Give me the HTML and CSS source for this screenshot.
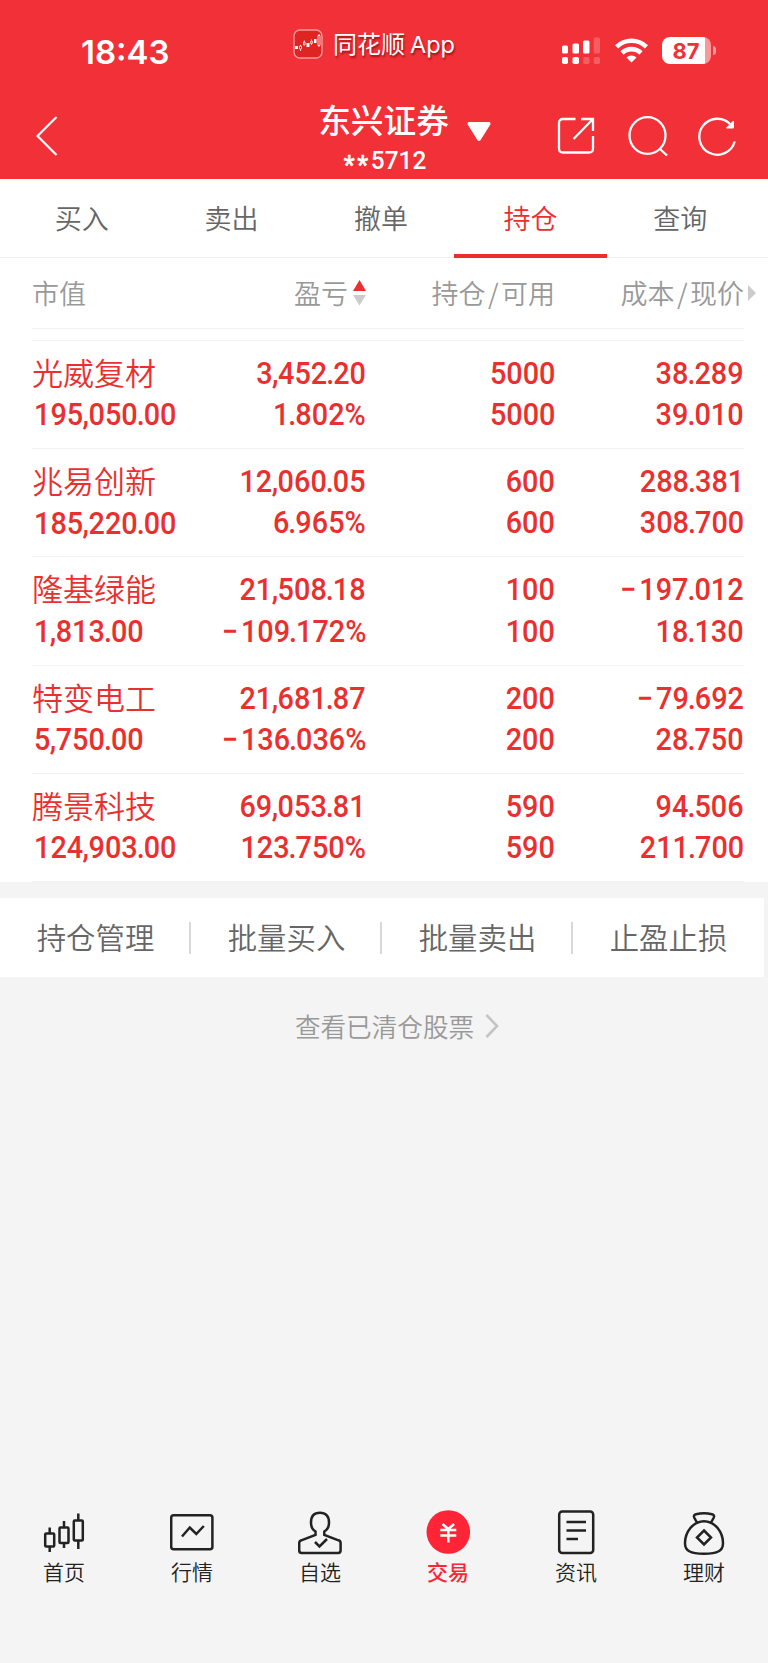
FILE: index.html
```html
<!DOCTYPE html>
<html lang="zh-CN">
<head>
<meta charset="utf-8">
<title>持仓</title>
<link rel="stylesheet" href="styles.css">
</head>
<body>
<header class="top">
  <div class="status">
    <span class="clock">18:43</span>
    <span class="brand">
      <svg width="30" height="30" viewBox="0 0 30 30" fill="none" stroke="#fff"><rect x="1" y="1" width="28" height="28" rx="6" fill="#df2424" stroke="#f9989b" stroke-width="1.4"/><path d="M2 17h3v3H2zM13.500 14h3v4h-3zM21 10h2.500v4H21z" fill="#fff" stroke="none"/><path d="M6.500 17h2v3h-2zM7.500 16v1M7.500 20v2M10.500 13h1.500v3h-1.500zM11.300 11.500v1.500M17.700 12h1.600v2.500h-1.600zM18.500 10.500v1.500M18.500 14.500v1.500M25 6.500h2v10h-2zM26 5v1.500M26 16.500V18" stroke-width=".8"/></svg>
      <span class="brand-text">同花顺<span class="brand-app">App</span></span>
    </span>
    <svg class="signal" width="38" height="28" viewBox="0 0 38 28" fill="#fff"><rect x="0" y="8.500" width="6" height="8" rx="1.500"/><rect x="10.500" y="6.500" width="6.500" height="10" rx="1.500"/><rect x="21" y="3.500" width="6.500" height="13" rx="1.500"/><rect x="0" y="20" width="6" height="7" rx="1.700"/><rect x="10.500" y="20" width="6.500" height="7" rx="1.700"/><g opacity=".22"><rect x="31.700" y="0.500" width="6.300" height="16" rx="1.500"/><rect x="21" y="20" width="6.500" height="7" rx="1.700"/><rect x="31.700" y="20" width="6.300" height="7" rx="1.700"/></g></svg>
    <svg class="wifi" width="33" height="25" viewBox="0 0 33 25" fill="none" stroke="#fff" stroke-width="4.600"><path d="M1.600 8.800a21.500 21.500 0 0 1 29.800 0"/><path d="M7 15a13.500 13.500 0 0 1 19 0"/><path d="M16.500 24.500l-5-5a7.100 7.100 0 0 1 10 0z" fill="#fff" stroke="none"/></svg>
    <span class="battery">87</span><span class="battery-cap"></span>
  </div>
  <div class="bar">
    <svg class="back" width="22" height="40" viewBox="0 0 22 40" fill="none" stroke="#fff" stroke-width="2.200"><path d="M20.500 1L1.500 20l19 19"/></svg>
    <div class="account">
      <div class="broker">东兴证券</div>
      <div class="number"><span class="stars">**</span>5712</div>
    </div>
    <svg class="caret" width="24" height="19" viewBox="0 0 24 19" fill="#fff"><path d="M1.500 0h21q1.500.8.800 2.500L13.500 18.200q-1.500 1.500-3 0L.7 2.500Q0 .8 1.500 0z"/></svg>
    <svg class="share" width="38" height="38" viewBox="0 0 38 38" fill="none" stroke="#fff" stroke-width="2.300"><path d="M18.500 2H6Q2 2 2 6v25.500q0 4 4 4h26q4 0 4-4V19M24 2h12v12M36 2L16.500 22"/></svg>
    <svg class="search" width="40" height="40" viewBox="0 0 40 40" fill="none" stroke="#fff" stroke-width="2.300"><ellipse cx="19.500" cy="19.500" rx="18" ry="18.300"/><path d="M31.500 32.500l7.500 7"/></svg>
    <svg class="reload" width="38" height="40" viewBox="0 0 38 40" fill="none" stroke="#fff" stroke-width="2.300"><path d="M36.700 25.500A18 18 0 1 1 33 9"/><path d="M35.500 5v7h-7z" fill="#fff" stroke-width="1"/></svg>
  </div>
</header>

<nav class="tabs">
  <span class="tab">买入</span><span class="tab">卖出</span><span class="tab">撤单</span><span class="tab active">持仓</span><span class="tab">查询</span>
</nav>

<main class="holdings">
  <div class="row heading">
    <span class="cell">市值</span>
    <span class="cell">盈亏<svg class="sort" width="13" height="26" viewBox="0 0 13 26"><path d="M6.500 0L13 11H0z" fill="#e8302f"/><path d="M0 15h13L6.500 25.500z" fill="#ccc"/></svg></span>
    <span class="cell">持仓<span class="slash">/</span>可用</span>
    <span class="cell">成本<span class="slash">/</span>现价<svg class="more" width="8" height="16" viewBox="0 0 8 16"><path d="M0 0l8 8-8 8z" fill="#ccc"/></svg></span>
  </div>
  <div class="spacer"></div>
  <div class="row"><div class="cell"><b class="name">光威复材</b><i class="num">195<s>,</s>050<u>.</u>00</i></div><div class="cell"><i class="num">3<s>,</s>452<u>.</u>20</i><i class="num">1<u>.</u>802%</i></div><div class="cell"><i class="num">5000</i><i class="num">5000</i></div><div class="cell"><i class="num">38<u>.</u>289</i><i class="num">39<u>.</u>010</i></div></div>
  <div class="row"><div class="cell"><b class="name">兆易创新</b><i class="num">185<s>,</s>220<u>.</u>00</i></div><div class="cell"><i class="num">12<s>,</s>060<u>.</u>05</i><i class="num">6<u>.</u>965%</i></div><div class="cell"><i class="num">600</i><i class="num">600</i></div><div class="cell"><i class="num">288<u>.</u>381</i><i class="num">308<u>.</u>700</i></div></div>
  <div class="row"><div class="cell"><b class="name">隆基绿能</b><i class="num">1<s>,</s>813<u>.</u>00</i></div><div class="cell"><i class="num">21<s>,</s>508<u>.</u>18</i><i class="num"><em>−</em>109<u>.</u>172%</i></div><div class="cell"><i class="num">100</i><i class="num">100</i></div><div class="cell"><i class="num"><em>−</em>197<u>.</u>012</i><i class="num">18<u>.</u>130</i></div></div>
  <div class="row"><div class="cell"><b class="name">特变电工</b><i class="num">5<s>,</s>750<u>.</u>00</i></div><div class="cell"><i class="num">21<s>,</s>681<u>.</u>87</i><i class="num"><em>−</em>136<u>.</u>036%</i></div><div class="cell"><i class="num">200</i><i class="num">200</i></div><div class="cell"><i class="num"><em>−</em>79<u>.</u>692</i><i class="num">28<u>.</u>750</i></div></div>
  <div class="row"><div class="cell"><b class="name">腾景科技</b><i class="num">124<s>,</s>903<u>.</u>00</i></div><div class="cell"><i class="num">69<s>,</s>053<u>.</u>81</i><i class="num">123<u>.</u>750%</i></div><div class="cell"><i class="num">590</i><i class="num">590</i></div><div class="cell"><i class="num">94<u>.</u>506</i><i class="num">211<u>.</u>700</i></div></div>
</main>

<div class="actions"><span>持仓管理</span><span>批量买入</span><span>批量卖出</span><span>止盈止损</span></div>

<div class="cleared">查看已清仓股票<svg width="14" height="24" viewBox="0 0 14 24" fill="none" stroke="#c4c4c4" stroke-width="2.600"><path d="M1.500 1l10.500 11L1.500 23"/></svg></div>

<footer class="dock">
  <div class="item"><svg width="44" height="46" viewBox="0 0 44 46" fill="none" stroke="#222" stroke-width="2.500"><rect x="3.200" y="24.500" width="9" height="13" rx="1"/><path d="M7.700 18.500v6M7.700 37.500V43"/><rect x="17.500" y="18.500" width="9" height="15.500" rx="1"/><path d="M22 12v6.500M22 34v5"/><rect x="31.800" y="11.500" width="9" height="20" rx="1"/><path d="M36.300 4.500v7M36.300 31.500V40"/></svg><span>首页</span></div>
  <div class="item"><svg width="44" height="46" viewBox="0 0 44 46" fill="none" stroke="#222" stroke-width="2.500"><rect x="1.200" y="6.200" width="41.200" height="34" rx="2.500"/><path d="M12 27.500l7.800-9 6.500 6.500 7.500-8"/></svg><span>行情</span></div>
  <div class="item"><svg width="44" height="46" viewBox="0 0 44 46" fill="none" stroke="#222" stroke-width="2.500"><path d="M17.500 22.500v3.300L3.300 31.300Q1.200 32 1.200 34v7.500q0 2.400 2.400 2.400h36.600q2.400 0 2.400-2.400V34q0-2-2.100-2.700L26.300 25.800v-3.300Q31 20 31 13.500C31 7 27.500 3.800 22 3.800S13 7 13 13.500q0 6.500 4.500 9z"/><path d="M17 33l4.500 4.500 7.500-7.500"/></svg><span>自选</span></div>
  <div class="item current"><svg width="44" height="46" viewBox="0 0 44 46" fill="none" stroke="#fff" stroke-width="2.500"><circle cx="22.300" cy="23" r="21.800" fill="#ff2436" stroke="none"/><path d="M16.500 15l5.800 5 5.800-5M14.300 21h16M14.300 26.500h16M22.300 20V33.500"/></svg><span>交易</span></div>
  <div class="item"><svg width="44" height="46" viewBox="0 0 44 46" fill="none" stroke="#222" stroke-width="2.500"><rect x="5.200" y="2.500" width="34" height="41.500" rx="3"/><path d="M12.500 13h19.500M12.500 21.400h19.500M12.500 30H24"/></svg><span>资讯</span></div>
  <div class="item"><svg width="44" height="46" viewBox="0 0 44 46" fill="none" stroke="#222" stroke-width="2.500"><path d="M15.500 14.500L12.300 8.800Q11 6 14 5.300q8-2 16 0 3 .7 1.700 3.500L28.500 14.500"/><path d="M22 12.200c-11 0-19 11-19 22 0 7.500 5 10.500 19 10.500s19-3 19-10.500c0-11-8-22-19-22z"/><path d="M22 21.500l7 7-7 7-7-7z"/></svg><span>理财</span></div>
</footer>
</body>
</html>
```

FILE: styles.css
```css
* { box-sizing: border-box; }
body {
  margin: 0;
  width: 768px;
  height: 1663px;
  overflow: hidden;
  display: flex;
  flex-direction: column;
  background: #f4f4f4;
  color: #666;
  font-family: "Noto Sans CJK SC DemiLight", "Noto Sans CJK SC", sans-serif;
  font-weight: 350;
}
svg { display: block; flex: none; }
b, i, em { font-weight: inherit; font-style: normal; }
s, u { text-decoration: none; }

.top { height: 179.300px; background: #f23037; color: #fff; flex: none; }
.status { display: flex; height: 90px; align-items: flex-start; }
.clock {
  width: 212px; margin-top: 32px; padding-left: 81px;
  font: 600 33px/40px Inter, sans-serif;
}
.brand { display: flex; width: 268px; padding-left: 81px; margin-top: 29px; }
.brand-text {
  margin: -1px 0 0 10px; font-size: 24px; line-height: 30px; font-weight: 400;
  white-space: nowrap; text-shadow: 1px 2px 2px rgba(90, 0, 0, .6);
}
.brand-app { margin-left: 5px; font-family: Inter, sans-serif; font-size: 23.500px; }
.signal { margin: 37px 0 0 82px; }
.wifi { margin: 38px 0 0 14.500px; }
.battery {
  width: 49px; height: 27px; margin: 37px 0 0 14.500px; padding-right: 1px;
  border-radius: 8px; text-align: center; color: #f23037;
  background: linear-gradient(90deg, #fff 43px, #f9989b 43px);
  font: 700 22px/29px Inter, sans-serif;
}
.battery-cap { width: 3px; height: 9px; margin: 46px 0 0 2px; border-radius: 0 4px 4px 0; background: #f9989b; }

.bar { display: flex; align-items: flex-start; }
.back { margin: 25.500px 0 0 35.500px; }
.account { width: 132px; margin: 7px 0 0 260px; text-align: center; }
.broker { font-size: 32.700px; font-weight: 500; line-height: 44px; white-space: nowrap; }
.number { font: 500 26.500px/32px Roboto, sans-serif; transform: scaleX(.92); margin: 3px 0 0 2px; }
.stars { letter-spacing: 3px; position: relative; top: 4px; -webkit-text-stroke: .6px #fff; }
.caret { margin: 32px 0 0 17px; }
.share { margin: 26.500px 0 0 66px; }
.search { margin: 26px 0 0 33.500px; }
.reload { margin: 26px 0 0 29.500px; }

.tabs {
  display: flex; flex: none; height: 78.700px; padding: 0 13px 0 7px;
  background: #fff; border-bottom: 1px solid #eee;
}
.tab { position: relative; flex: 1; text-align: center; font-size: 27px; line-height: 77px; }
.active { color: #ee2c2e; }
.active::after {
  content: ""; position: absolute; left: -2px; right: -2px; bottom: -1px;
  height: 4px; background: #ee2c2e;
}

.holdings { flex: none; padding: 0 24px 0 32px; background: #fff; }
.row {
  display: grid; grid-template-columns: 180px 154px 189px 189px;
  height: 108.200px; padding-top: 12px;
  border-bottom: 1px solid #f2f2f2; color: #ea302e;
}
.heading { height: 71px; padding-top: 0; color: #999; font-size: 27px; line-height: 70px; }
.heading .cell { flex-direction: row; align-items: center; justify-content: flex-end; }
.heading .cell:first-child { justify-content: flex-start; }
.slash { margin: 0 2.500px; }
.sort { margin: 1px 0 0 5px; }
.more { margin: 1px -12px 0 4px; }
.spacer { height: 12px; border-bottom: 1px solid #f2f2f2; }
.cell { display: flex; flex-direction: column; align-items: flex-end; white-space: nowrap; }
.cell:first-child { align-items: flex-start; }
.name { font-size: 31px; line-height: 41.500px; margin: -2px 0 2px; }
.num { font: 500 31px/41.300px Roboto, sans-serif; transform: scaleX(.93); transform-origin: right; }
.num u { margin: 0 -1.100px; }
.num s { margin: 0 -.6px; }
.num em { margin-right: 3px; }
.cell:first-child .num { transform-origin: left; margin-left: 1.500px; }

.actions { display: flex; flex: none; width: 764px; height: 79px; margin-top: 16px; background: #fff; }
.actions span { position: relative; flex: 1; text-align: center; font-size: 29.400px; line-height: 76px; }
.actions span + span::before {
  content: ""; position: absolute; left: -2px; top: 24px; width: 2px; height: 32px; background: #d8d8d8;
}
.cleared {
  display: flex; flex: none; align-items: center; justify-content: center; gap: 11px;
  margin-top: 29.500px; padding-left: 26px; height: 40px; font-size: 25.600px; line-height: 38px; color: #999;
}

.dock { display: flex; margin-top: auto; height: 154px; flex: none; }
.item { flex: 1; display: flex; flex-direction: column; align-items: center; color: #222; }
.item span { font-size: 21px; line-height: 30px; margin-top: 1px; }
.item.current span { color: #ff2436; font-weight: 500; font-family: "Noto Sans CJK SC", sans-serif; }
.broker, .brand-text { font-family: "Noto Sans CJK SC", sans-serif; }
```
